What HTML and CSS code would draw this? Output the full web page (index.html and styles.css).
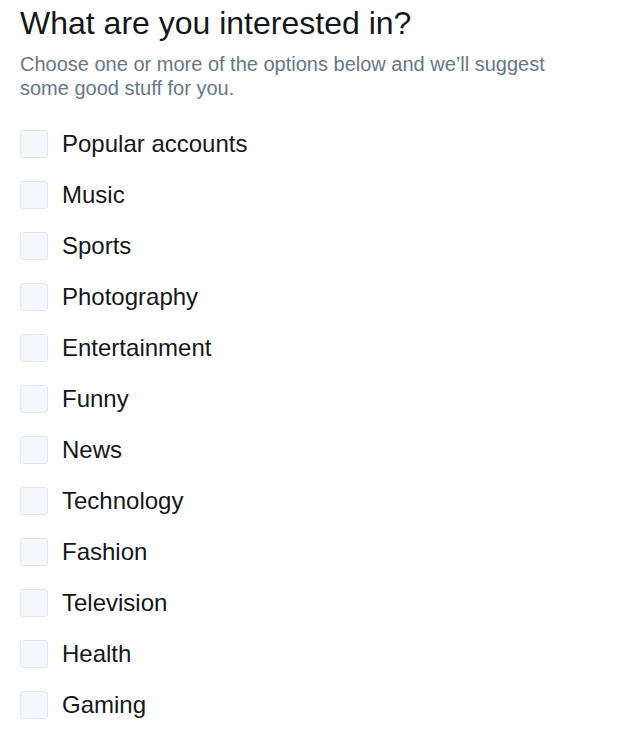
FILE: index.html
```html
<!DOCTYPE html>
<html>
<head>
<meta charset="utf-8">
<link rel="stylesheet" href="styles.css">
</head>
<body>
<div class="page">
  <h1 class="title">What are you interested in?</h1>
  <p class="subtitle">Choose one or more of the options below and we’ll suggest<br>some good stuff for you.</p>
  <ul class="options">
    <li class="option"><span class="box"></span><span class="label">Popular accounts</span></li>
    <li class="option"><span class="box"></span><span class="label">Music</span></li>
    <li class="option"><span class="box"></span><span class="label">Sports</span></li>
    <li class="option"><span class="box"></span><span class="label">Photography</span></li>
    <li class="option"><span class="box"></span><span class="label">Entertainment</span></li>
    <li class="option"><span class="box"></span><span class="label">Funny</span></li>
    <li class="option"><span class="box"></span><span class="label">News</span></li>
    <li class="option"><span class="box"></span><span class="label">Technology</span></li>
    <li class="option"><span class="box"></span><span class="label">Fashion</span></li>
    <li class="option"><span class="box"></span><span class="label">Television</span></li>
    <li class="option"><span class="box"></span><span class="label">Health</span></li>
    <li class="option"><span class="box"></span><span class="label">Gaming</span></li>
  </ul>
</div>
</body>
</html>
```
FILE: styles.css
```css
html, body { margin: 0; padding: 0; background: #fff; }
body { font-family: "Liberation Sans", Arial, sans-serif; color: #14171a; }
.page { padding: 3px 20px 0 20px; }
.title { margin: 0; font-size: 32px; font-weight: normal; line-height: 40px; color: #14171a; }
.subtitle { margin: 9px 0 0 0; font-size: 20px; line-height: 24px; color: #657786; }
.options { list-style: none; margin: 30px 0 0 0; padding: 0; display: flex; flex-direction: column; gap: 23px; }
.option { display: flex; align-items: center; gap: 14px; height: 28px; }
.box { width: 26px; height: 26px; border: 1px solid #e1e8ed; background: #f5f8fa; border-radius: 3px; flex: none; }
.label { font-size: 24px; line-height: 28px; color: #14171a; }
```
